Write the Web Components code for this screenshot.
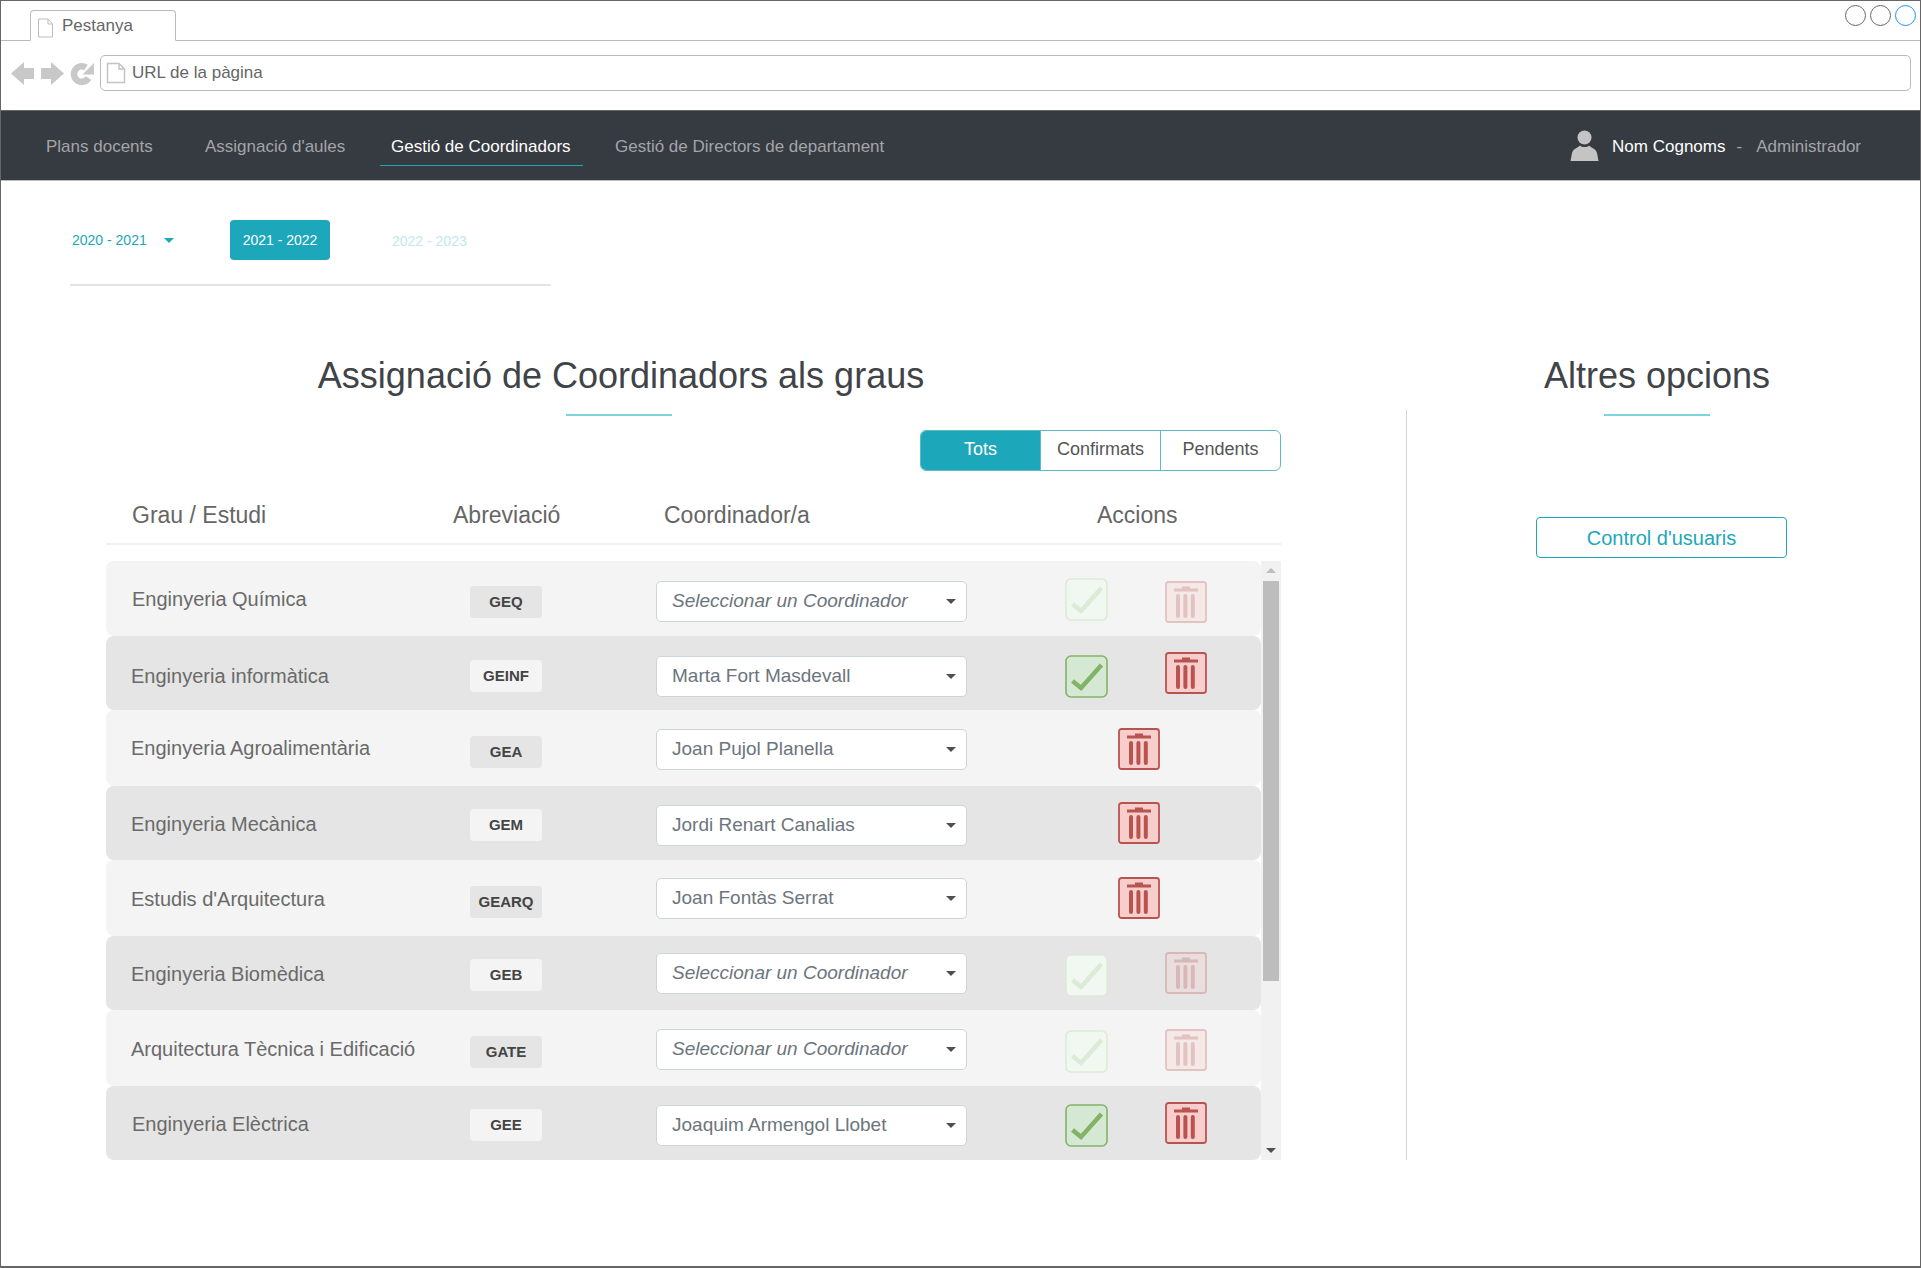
<!DOCTYPE html>
<html lang="ca">
<head>
<meta charset="utf-8">
<title>Gestió de Coordinadors</title>
<style>
  html, body { margin: 0; padding: 0; background: #fff; }
  body { font-family: "Liberation Sans", Arial, sans-serif; overflow: hidden; }
</style>
</head>
<body>
<browser-frame>
  <top-nav></top-nav>
  <year-tabs></year-tabs>
  <main-layout>
    <section-title slot="left-title" style="--rule-shift: 55px">Assignació de Coordinadors als graus</section-title>
    <section-title slot="right-title" style="--rule-shift: 53.5px">Altres opcions</section-title>
    <filter-tabs slot="left"></filter-tabs>
    <coord-table slot="left">
      <coord-row h="75" name="Enginyeria Química" abbr="GEQ" state="pending" sel="20" txt="1" abr="25" chk="17" del="20" nx="0"></coord-row>
      <coord-row h="74" name="Enginyeria informàtica" abbr="GEINF" coord="Marta Fort Masdevall" state="done" sel="20" txt="3" abr="24" chk="19" del="16" nx="-1"></coord-row>
      <coord-row h="76" name="Enginyeria Agroalimentària" abbr="GEA" coord="Joan Pujol Planella" state="locked" sel="19" txt="1" abr="26" del="18" nx="-1"></coord-row>
      <coord-row h="74" name="Enginyeria Mecànica" abbr="GEM" coord="Jordi Renart Canalias" state="locked" sel="19" txt="1" abr="23" del="16" nx="-1"></coord-row>
      <coord-row h="76" name="Estudis d'Arquitectura" abbr="GEARQ" coord="Joan Fontàs Serrat" state="locked" sel="18" txt="2" abr="26" del="17" nx="-1"></coord-row>
      <coord-row h="74" name="Enginyeria Biomèdica" abbr="GEB" state="pending" sel="17" txt="1" abr="23" chk="18" del="16" nx="-1"></coord-row>
      <coord-row h="76" name="Arquitectura Tècnica i Edificació" abbr="GATE" state="pending" sel="19" txt="2" abr="26" chk="20" del="19" nx="-1"></coord-row>
      <coord-row h="74" name="Enginyeria Elèctrica" abbr="GEE" coord="Joaquim Armengol Llobet" state="done" sel="19" txt="1" abr="23" chk="18" del="16" nx="0"></coord-row>
    </coord-table>
    <action-link slot="right">Control d'usuaris</action-link>
  </main-layout>
</browser-frame>

<script>
const TEAL = '#1ca7ba';
const DOC_ICON = `<path d="M1.5 1 H11 L15.5 6 V19 H1.5 Z M11 1 V6 H15.5" fill="#fff" stroke="#bdbdbd" stroke-width="1"/>`;

class BrowserFrame extends HTMLElement {
  constructor() {
    super();
    this.attachShadow({ mode: 'open' });
  }

  connectedCallback() {
    this.shadowRoot.innerHTML = `
      <style>
        :host {
          display: block;
          box-sizing: border-box;
          width: 1921px;
          height: 1268px;
          border: 1px solid #666;
          border-bottom-width: 2px;
          background: #fff;
          color: #666;
          overflow: hidden;
        }
        .strip {
          display: flex;
          justify-content: space-between;
          height: 39px;
          border-bottom: 1px solid #bbb;
        }
        .tab {
          display: flex;
          gap: 8px;
          box-sizing: border-box;
          width: 146px;
          height: 31px;
          margin: 9px 0 0 29px;
          padding: 5px 0 0 6px;
          border: 1px solid #bbb;
          border-bottom: 1px solid #fff;
          border-radius: 4px 4px 0 0;
          background: #fff;
          font-size: 17px;
          line-height: 19px;
        }
        .tab svg { margin-top: 2px; }
        .circles { display: flex; gap: 4px; padding: 4px 4px 0 0; }
        .circles i {
          display: block;
          box-sizing: border-box;
          width: 21px;
          height: 21px;
          border: 1px solid #666;
          border-radius: 50%;
        }
        .circles i:last-child { border-color: #1e90ff; }
        .tools {
          display: flex;
          align-items: flex-start;
          height: 69px;
          padding: 14px 9px 0 9px;
          box-sizing: border-box;
        }
        .tools > svg { flex: none; margin-top: 6px; }
        .url {
          flex: 1;
          display: flex;
          align-items: center;
          gap: 6px;
          box-sizing: border-box;
          height: 36px;
          margin-left: 6px;
          padding: 0 0 1px 5px;
          border: 1px solid #bbb;
          border-radius: 5px;
          font-size: 17px;
        }
      </style>
      <div class="strip">
        <div class="tab">
          <svg width="17" height="20" viewBox="0 0 17 20">${DOC_ICON}</svg>
          <span>Pestanya</span>
        </div>
        <div class="circles"><i></i><i></i><i></i></div>
      </div>
      <div class="tools">
        <svg width="84" height="26" viewBox="0 0 84 26" fill="#c8c8c8">
          <path d="M1 12.5 L14 1 V7 H24 V18 H14 V24 Z"/>
          <path d="M54 12.5 L41 1 V7 H31 V18 H41 V24 Z"/>
          <path d="M78.5 17 A7.8 7.8 0 1 1 76 6.5" fill="none" stroke="#c8c8c8" stroke-width="6.5"/>
          <path d="M84 2 V13.5 H72.5 Z"/>
        </svg>
        <div class="url">
          <svg width="20" height="22" viewBox="0 0 20 22">
            <path d="M1.5 1.5 H13 L18.5 7 V20.5 H1.5 Z M13 1.5 V7 H18.5" fill="#fff" stroke="#c4c4c4" stroke-width="1.5"/>
          </svg>
          <span>URL de la pàgina</span>
        </div>
      </div>
      <slot></slot>
    `;
  }
}

class TopNav extends HTMLElement {
  constructor() {
    super();
    this.attachShadow({ mode: 'open' });
  }

  connectedCallback() {
    this.shadowRoot.innerHTML = `
      <style>
        :host {
          display: flex;
          align-items: center;
          box-sizing: border-box;
          height: 71px;
          border-top: 1px solid #666;
          border-bottom: 1px solid #bbb;
          background: #363a41;
          color: #a3a5a8;
          font-size: 17px;
        }
        .links {
          display: flex;
          align-items: flex-start;
          height: 41px;
          padding-left: 45px;
        }
        a { display: block; padding-top: 12px; line-height: 20px; }
        .links a:nth-child(1) { width: 159px; }
        .links a:nth-child(2) { width: 175px; }
        .links .active {
          box-sizing: border-box;
          width: 203px;
          height: 41px;
          margin-right: 32px;
          padding-left: 11px;
          border-bottom: 1px solid ${TEAL};
          color: #fff;
        }
        .user {
          display: flex;
          align-items: center;
          margin-left: auto;
          padding: 3px 59px 0 0;
        }
        .user svg { margin: -3px 13px 0 0; }
        b { font-weight: normal; color: #fff; }
        .sep { margin: 0 14px 0 11px; }
      </style>
      <div class="links">
        <a>Plans docents</a>
        <a>Assignació d'aules</a>
        <a class="active">Gestió de Coordinadors</a>
        <a>Gestió de Directors de departament</a>
      </div>
      <div class="user">
        <svg width="29" height="31" viewBox="0 0 29 31" fill="#c4c4c4">
          <circle cx="14.5" cy="7.5" r="7"/>
          <path d="M0.5 31 L2 23 C3 19 7 18 10 15.5 C12 17.5 17 17.5 19 15.5 C22 18 26 19 27 23 L28.5 31 Z"/>
        </svg>
        <b>Nom Cognoms</b><span class="sep">-</span><span>Administrador</span>
      </div>
    `;
  }
}

class YearTabs extends HTMLElement {
  constructor() {
    super();
    this.attachShadow({ mode: 'open' });
  }

  connectedCallback() {
    this.shadowRoot.innerHTML = `
      <style>
        :host {
          display: flex;
          align-items: center;
          box-sizing: border-box;
          width: 481px;
          height: 66px;
          margin: 39px 0 0 69px;
          padding: 0 0 24px 2px;
          border-bottom: 2px solid #e4e4e4;
          font-size: 14px;
          color: ${TEAL};
        }
        .first { width: 92px; }
        .caret {
          width: 0;
          height: 0;
          margin: 1px 56px 0 0;
          border: 5px solid transparent;
          border-top: 5px solid ${TEAL};
          border-bottom: 0;
        }
        .on {
          box-sizing: border-box;
          width: 100px;
          height: 40px;
          border-radius: 4px;
          background: ${TEAL};
          color: #fff;
          line-height: 40px;
          text-align: center;
        }
        .off { margin: 2px 0 0 62px; color: #c0e8ee; }
      </style>
      <span class="first">2020 - 2021</span>
      <i class="caret"></i>
      <span class="on">2021 - 2022</span>
      <span class="off">2022 - 2023</span>
    `;
  }
}

class MainLayout extends HTMLElement {
  constructor() {
    super();
    this.attachShadow({ mode: 'open' });
  }

  connectedCallback() {
    this.shadowRoot.innerHTML = `
      <style>
        :host {
          display: grid;
          grid-template-columns: 1405px 1fr;
          grid-template-rows: 64px auto;
          margin-top: 66px;
        }
        .lt { padding-left: 105px; width: 1030px; }
        .rt { width: 502px; }
        .left { padding-left: 105px; width: 1175px; padding-top: 14px; }
        .right {
          margin-top: -6px;
          height: 750px;
          box-sizing: border-box;
          padding: 107px 0 0 129px;
          border-left: 1px solid #d4d4d4;
        }
      </style>
      <div class="lt"><slot name="left-title"></slot></div>
      <div class="rt"><slot name="right-title"></slot></div>
      <div class="left"><slot name="left"></slot></div>
      <div class="right"><slot name="right"></slot></div>
    `;
  }
}

class SectionTitle extends HTMLElement {
  constructor() {
    super();
    this.attachShadow({ mode: 'open' });
  }

  connectedCallback() {
    this.shadowRoot.innerHTML = `
      <style>
        :host {
          display: block;
          padding-top: 3px;
          color: #404347;
          font-size: 36px;
          line-height: 42px;
          text-align: center;
        }
        i {
          display: block;
          width: 106px;
          height: 2px;
          margin: 17px 0 0 calc(50% - var(--rule-shift));
          background: #7fd2df;
        }
      </style>
      <slot></slot>
      <i></i>
    `;
  }
}

class FilterTabs extends HTMLElement {
  constructor() {
    super();
    this.attachShadow({ mode: 'open' });
  }

  connectedCallback() {
    this.shadowRoot.innerHTML = `
      <style>
        :host {
          display: flex;
          box-sizing: border-box;
          width: 361px;
          height: 41px;
          margin-left: 814px;
          border: 1px solid #5fb9c6;
          border-radius: 6px;
          overflow: hidden;
          font-size: 18px;
          color: #555;
        }
        span {
          flex: 1;
          line-height: 37px;
          text-align: center;
          border-left: 1px solid #5fb9c6;
        }
        span:first-of-type {
          border: 0;
          background: ${TEAL};
          color: #fff;
        }
      </style>
      <span>Tots</span><span>Confirmats</span><span>Pendents</span>
    `;
  }
}

class CoordTable extends HTMLElement {
  constructor() {
    super();
    this.attachShadow({ mode: 'open' });
  }

  connectedCallback() {
    this.shadowRoot.innerHTML = `
      <style>
        :host { display: block; width: 1175px; margin-top: 10px; }
        .head {
          display: grid;
          grid-template-columns: 321px 211px 433px auto;
          box-sizing: border-box;
          height: 64px;
          padding: 19px 0 0 26px;
          border-bottom: 2px solid #efefef;
          font-size: 23px;
          line-height: 30px;
          color: #666;
        }
        .body { display: flex; margin-top: 16px; height: 599px; }
        .rows { display: flex; flex-direction: column; width: 1155px; }
        .bar {
          display: flex;
          flex-direction: column;
          align-items: center;
          width: 20px;
          padding-top: 7px;
          box-sizing: border-box;
          background: #f1f1f1;
        }
        .up, .down {
          width: 0;
          height: 0;
          border: 5px solid transparent;
          border-top: 0;
          border-bottom: 5px solid #bdbdbd;
        }
        .down {
          margin-top: auto;
          margin-bottom: 7px;
          border: 5px solid transparent;
          border-bottom: 0;
          border-top: 5px solid #505050;
        }
        .thumb { width: 16px; height: 400px; margin-top: 8px; background: #bdbdbd; }
      </style>
      <div class="head">
        <span>Grau / Estudi</span>
        <span>Abreviació</span>
        <span>Coordinador/a</span>
        <span>Accions</span>
      </div>
      <div class="body">
        <div class="rows"><slot></slot></div>
        <div class="bar"><i class="up"></i><i class="thumb"></i><i class="down"></i></div>
      </div>
    `;
  }
}

class CoordRow extends HTMLElement {
  constructor() {
    super();
    this.attachShadow({ mode: 'open' });
  }

  connectedCallback() {
    const name = this.getAttribute('name');
    const abbr = this.getAttribute('abbr');
    const coord = this.getAttribute('coord');
    const state = this.getAttribute('state');
    const even = [...this.parentNode.children].indexOf(this) % 2 === 1;
    const px = (attr) => `${this.getAttribute(attr) || 0}px`;
    const check = state === 'locked' ? '' : `<check-button style="margin-top:${px('chk')}" ${state === 'pending' ? 'dim' : ''}></check-button>`;
    const trash = `<trash-button style="margin-top:${px('del')}" ${state === 'pending' ? 'dim' : ''}></trash-button>`;
    this.shadowRoot.innerHTML = `
      <style>
        :host {
          display: grid;
          grid-template-columns: 338px 72px 114px 311px 98px 142px;
          box-sizing: border-box;
          flex: none;
          height: ${px('h')};
          padding-left: 26px;
          border-radius: 8px;
          background: ${even ? '#e5e5e5' : '#f4f4f4'};
          color: #6a6a6a;
        }
        .name {
          margin-left: ${px('nx')};
          font-size: 20px;
          line-height: 75px;
          margin-top: ${px('txt')};
          white-space: nowrap;
        }
        .abbr {
          box-sizing: border-box;
          height: 32px;
          margin-top: ${px('abr')};
          border-radius: 4px;
          background: ${even ? '#f4f4f4' : '#e5e5e5'};
          color: #444;
          font-size: 15px;
          font-weight: bold;
          line-height: 32px;
          text-align: center;
        }
        coord-select { grid-column: 4; margin-top: ${px('sel')}; }
        .acts {
          grid-column: 6;
          display: flex;
          align-items: flex-start;
          justify-content: ${state === 'locked' ? 'center' : 'space-between'};
          padding-left: ${state === 'locked' ? '5px' : '0'};
        }
      </style>
      <div class="name">${name}</div>
      <div class="abbr">${abbr}</div>
      <coord-select ${coord ? `value="${coord}"` : ''}></coord-select>
      <div class="acts">${check}${trash}</div>
    `;
  }
}

class CoordSelect extends HTMLElement {
  constructor() {
    super();
    this.attachShadow({ mode: 'open' });
  }

  connectedCallback() {
    const value = this.getAttribute('value');
    this.shadowRoot.innerHTML = `
      <style>
        :host {
          display: flex;
          align-items: center;
          justify-content: space-between;
          box-sizing: border-box;
          height: 41px;
          padding: 0 10px 2px 15px;
          border: 1px solid #ced4da;
          border-radius: 5px;
          background: #fff;
          color: #6c757d;
          font-size: 19px;
          white-space: nowrap;
        }
        .ph { font-style: italic; }
        i {
          width: 0;
          height: 0;
          margin-top: 2px;
          border: 5px solid transparent;
          border-top: 5px solid #505050;
          border-bottom: 0;
        }
      </style>
      <span class="${value ? '' : 'ph'}">${value || 'Seleccionar un Coordinador'}</span>
      <i></i>
    `;
  }
}

class CheckButton extends HTMLElement {
  constructor() {
    super();
    this.attachShadow({ mode: 'open' });
  }

  connectedCallback() {
    const dim = this.hasAttribute('dim');
    const fill = dim ? '#f1f8f1' : '#d5e8d4';
    const line = dim ? '#dcebd5' : '#82b366';
    this.shadowRoot.innerHTML = `
      <style>
        :host { display: block; width: 43px; height: 43px; }
      </style>
      <svg width="43" height="43" viewBox="0 0 43 43">
        <rect x="1" y="1" width="41" height="41" rx="5" fill="${fill}" stroke="${line}" stroke-width="1.6"/>
        <path d="M7.5 26 L16 33 L36.5 10" fill="none" stroke="${line}" stroke-width="4.5"/>
      </svg>
    `;
  }
}

class TrashButton extends HTMLElement {
  constructor() {
    super();
    this.attachShadow({ mode: 'open' });
  }

  connectedCallback() {
    this.shadowRoot.innerHTML = `
      <style>
        :host { display: block; width: 42px; height: 42px; }
        :host([dim]) { opacity: 0.3; }
      </style>
      <svg width="42" height="42" viewBox="0 0 42 42">
        <rect x="1" y="1" width="40" height="40" rx="2.5" fill="#f8cecc" stroke="#b85450" stroke-width="1.8"/>
        <path d="M9 7.5 H33 V10.5 H9 Z M17 7.5 V5.5 H25 V7.5 Z" fill="#b85450"/>
        <path d="M13 15 V35 M20.4 15 V35 M27.8 15 V35" fill="none" stroke="#b85450" stroke-width="4" stroke-linecap="round"/>
      </svg>
    `;
  }
}

class ActionLink extends HTMLElement {
  constructor() {
    super();
    this.attachShadow({ mode: 'open' });
  }

  connectedCallback() {
    this.shadowRoot.innerHTML = `
      <style>
        :host {
          display: block;
          box-sizing: border-box;
          width: 251px;
          height: 41px;
          border: 1px solid ${TEAL};
          border-radius: 4px;
          color: ${TEAL};
          font-size: 20px;
          line-height: 41px;
          text-align: center;
        }
      </style>
      <slot></slot>
    `;
  }
}

customElements.define('browser-frame', BrowserFrame);
customElements.define('top-nav', TopNav);
customElements.define('year-tabs', YearTabs);
customElements.define('main-layout', MainLayout);
customElements.define('section-title', SectionTitle);
customElements.define('filter-tabs', FilterTabs);
customElements.define('coord-table', CoordTable);
customElements.define('coord-select', CoordSelect);
customElements.define('check-button', CheckButton);
customElements.define('trash-button', TrashButton);
customElements.define('action-link', ActionLink);
customElements.define('coord-row', CoordRow);
</script>
</body>
</html>
